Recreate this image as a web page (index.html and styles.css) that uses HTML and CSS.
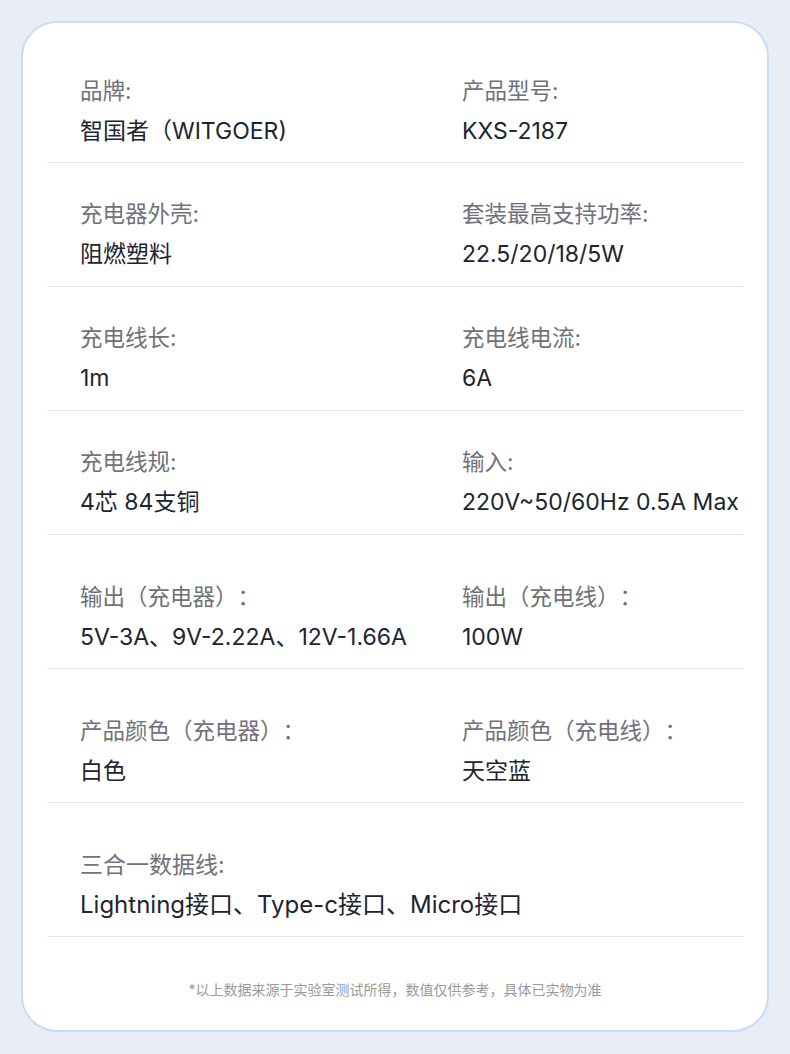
FILE: index.html
```html
<!DOCTYPE html>
<html lang="zh-CN">
<head>
<meta charset="utf-8">
<title>产品参数</title>
<link rel="stylesheet" href="styles.css">
</head>
<body>
<main class="card">
  <section class="row row-first">
    <div class="cell"><div class="label">品牌:</div><div class="value">智国者（WITGOER)</div></div>
    <div class="cell"><div class="label">产品型号:</div><div class="value">KXS-2187</div></div>
  </section>
  <section class="row">
    <div class="cell"><div class="label">充电器外壳:</div><div class="value">阻燃塑料</div></div>
    <div class="cell"><div class="label">套装最高支持功率:</div><div class="value">22.5/20/18/5W</div></div>
  </section>
  <section class="row">
    <div class="cell"><div class="label">充电线长:</div><div class="value">1m</div></div>
    <div class="cell"><div class="label">充电线电流:</div><div class="value">6A</div></div>
  </section>
  <section class="row">
    <div class="cell"><div class="label">充电线规:</div><div class="value">4芯 84支铜</div></div>
    <div class="cell"><div class="label">输入:</div><div class="value">220V~50/60Hz 0.5A Max</div></div>
  </section>
  <section class="row row-tall">
    <div class="cell"><div class="label">输出（充电器）：</div><div class="value">5V-3A、9V-2.22A、12V-1.66A</div></div>
    <div class="cell"><div class="label">输出（充电线）：</div><div class="value">100W</div></div>
  </section>
  <section class="row row-tall">
    <div class="cell"><div class="label">产品颜色（充电器）：</div><div class="value">白色</div></div>
    <div class="cell"><div class="label">产品颜色（充电线）：</div><div class="value">天空蓝</div></div>
  </section>
  <section class="row row-tall row-single">
    <div class="cell"><div class="label">三合一数据线:</div><div class="value">Lightning接口、Type-c接口、Micro接口</div></div>
  </section>
  <p class="note">*以上数据来源于实验室测试所得，数值仅供参考，具体已实物为准</p>
</main>
</body>
</html>
```

FILE: styles.css
```css
* { box-sizing: border-box; }

html, body {
  margin: 0;
  padding: 0;
}

body {
  background: #e8edf6;
  font-family: "Inter", "Noto Sans CJK SC", sans-serif;
  text-spacing-trim: space-all;
  padding: 21px;
}

.card {
  width: 748px;
  height: 1011px;
  background: #ffffff;
  border: 2px solid #c8dcfa;
  border-radius: 36px;
  padding: 0 24px 30px;
}

.row {
  display: grid;
  grid-template-columns: 382px 1fr;
  padding: 36px 0 17px 33px;
  border-bottom: 1px solid #e3e4e7;
}

.row-first {
  padding-top: 53px;
  padding-bottom: 16px;
}

.row-tall {
  padding-top: 47px;
  padding-bottom: 16px;
}

.row-single {
  grid-template-columns: 1fr;
}

.label {
  font-size: 22.5px;
  line-height: 30px;
  color: #6f727a;
  white-space: nowrap;
}

.value {
  margin-top: 10px;
  font-size: 23px;
  line-height: 30px;
  color: #20242f;
  white-space: nowrap;
}

.row-single .label {
  font-size: 23px;
}

.row-single .value {
  font-size: 24px;
}

.note {
  margin: 43px 0 0;
  text-align: center;
  font-size: 14px;
  line-height: 20px;
  color: #9a9a9a;
}
```
